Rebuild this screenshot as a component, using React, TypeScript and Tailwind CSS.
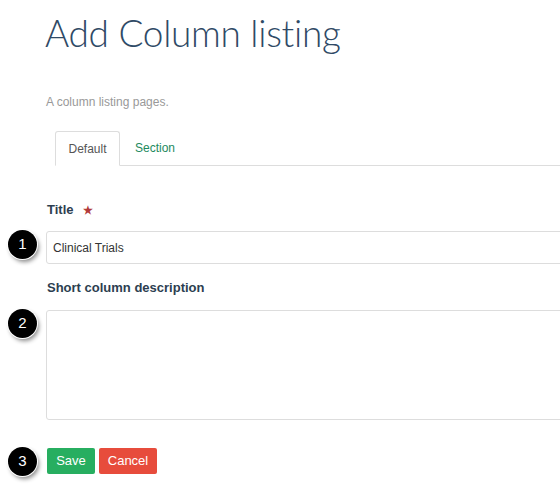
import type { ReactNode } from 'react'

function StepBadge({ n }: { n: number }) {
  return (
    <div className="-mt-[1px] flex h-[29px] w-[29px] items-center justify-center rounded-full bg-black text-[15px] text-white shadow-[2px_3px_4px_rgba(0,0,0,0.45)] ring-1 ring-white">
      {n}
    </div>
  )
}

function Row({ badge, children }: { badge?: number; children: ReactNode }) {
  return (
    <div className="grid grid-cols-[46px_1fr] items-start">
      <div className="flex justify-center pr-[1px]">
        {badge ? <StepBadge n={badge} /> : null}
      </div>
      {children}
    </div>
  )
}

export default function App() {
  return (
    <div className="h-[503px] w-[560px] overflow-hidden bg-white font-['Liberation_Sans',Arial,sans-serif] text-[12px] text-[#333]">
      <div className="pl-[45px] pt-[9px]">
        <h1 className="font-['Lato','Open_Sans',sans-serif] text-[37px] leading-[48px] font-light tracking-[-0.3px] text-[#2f4a66]">
          Add Column listing
        </h1>
        <p className="mt-[38px] pl-[1px] text-[12px] leading-[14px] text-[#999]">
          A column listing pages.
        </p>
      </div>

      <div className="mt-[22px] ml-[55px] flex border-b border-[#ddd]">
        <div className="-mb-px flex h-[35px] w-[65px] items-center justify-center rounded-t-[3px] border border-b-white border-[#ddd] bg-white text-[12px] text-[#555]">
          Default
        </div>
        <div className="flex h-[34px] items-center px-[15px] text-[12px] text-[#1e8a5e]">
          Section
        </div>
      </div>

      <div className="mt-[37px] pl-[47px] text-[13px] leading-[14px] font-bold text-[#2c3e50]">
        Title <span className="ml-[6px] text-[11px] text-[#b23a3a]">★</span>
      </div>

      <div className="mt-[14px]">
        <Row badge={1}>
          <input
            readOnly
            value="Clinical Trials"
            className="h-[33px] w-[560px] rounded-[3px] border border-[#ddd] px-[6px] text-[12px] text-[#333] outline-none"
          />
        </Row>
      </div>

      <div className="mt-[17px] pl-[47px] text-[13px] leading-[14px] font-bold text-[#2c3e50]">
        Short column description
      </div>

      <div className="mt-[15px]">
        <Row badge={2}>
          <textarea
            readOnly
            className="h-[110px] w-[560px] resize-none rounded-[3px] border border-[#ddd] outline-none"
          />
        </Row>
      </div>

      <div className="mt-[28px]">
        <Row badge={3}>
          <div className="flex gap-[4px] pl-[1px]">
            <button className="h-[26px] w-[48px] rounded-[2px] bg-[#27ae60] text-[13px] text-white">
              Save
            </button>
            <button className="h-[26px] w-[58px] rounded-[2px] bg-[#e74c3c] text-[13px] text-white">
              Cancel
            </button>
          </div>
        </Row>
      </div>
    </div>
  )
}
